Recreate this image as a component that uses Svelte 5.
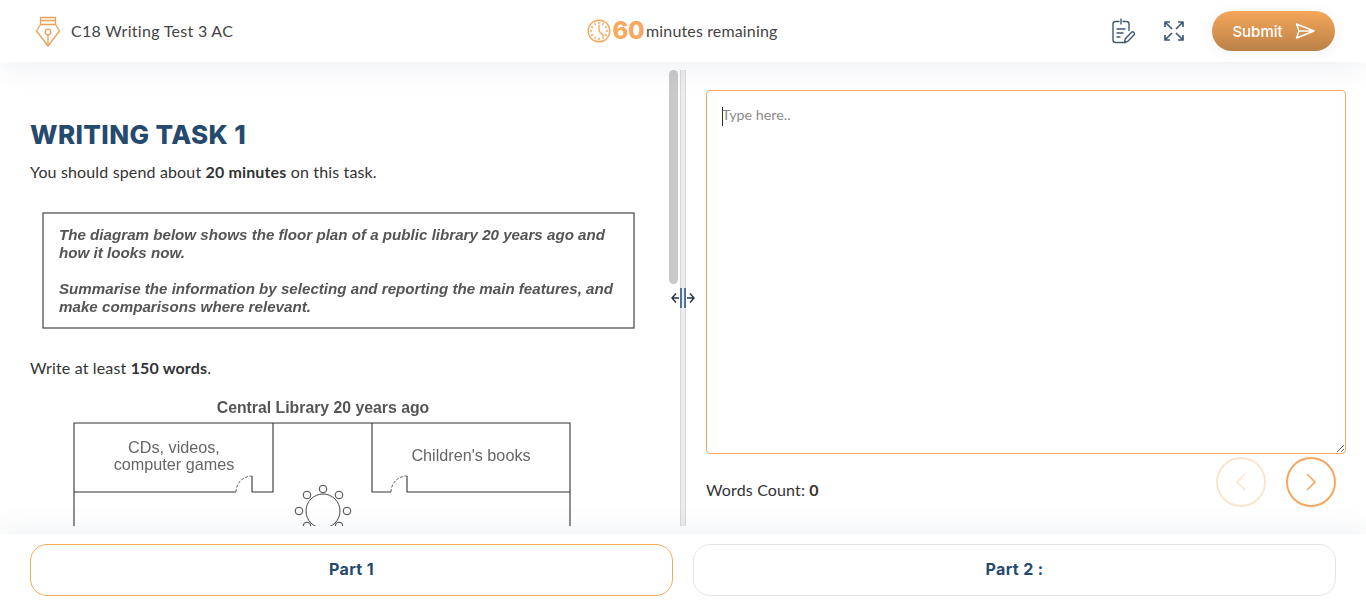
<script>
  const parts = [
    { label: 'Part 1', active: true },
    { label: 'Part 2 :', active: false }
  ];
  const ticks = [0, 30, 60, 90, 120, 150, 180, 210, 240, 270, 300, 330];
  const seats = [[323,488],[307,494],[339,494],[299,510],[347,510],[307,525],[339,525]];
</script>

<div class="app">
  <header class="top">
    <div class="brand">
      <svg class="nib" viewBox="0 0 26 32" width="26" height="32" aria-hidden="true">
        <path d="M5.500 2.500h15v7h-15zM5.500 5.500h15M5.500 9.500 1.500 16 13 31l11.500-15-4-6.500"/>
        <circle cx="13" cy="17" r="2.800"/>
        <path d="M13 20v10"/>
      </svg>
      <span class="label">C18 Writing Test 3 AC</span>
    </div>
    <div class="timer">
      <svg class="clock" viewBox="0 0 24 24" width="24" height="24" aria-hidden="true">
        <circle cx="12" cy="12" r="10.800"/>
        {#each ticks as t}
          <path class="tick" d="M12 3.400v1.300" transform="rotate({t} 12 12)"/>
        {/each}
        <path d="M12 6.500V12l4.500 5"/>
      </svg>
      <strong>60</strong>
      <span class="label">minutes remaining</span>
    </div>
    <div class="actions">
      <svg class="tool" viewBox="0 0 24 26" width="24" height="26" aria-hidden="true">
        <path d="M8 3.500H4.500a2.500 2.500 0 0 0-2.500 2.500v16a2.500 2.500 0 0 0 2.500 2.500h10M12 3.500h3.500a2.500 2.500 0 0 1 2.500 2.500v6.500M10 1v5M6 11h8M6 15h6M6 19h3"/>
        <path d="M13.500 24.500l.8-3.800 6-6.200a1.700 1.700 0 0 1 2.600 2.600l-6 6.100z"/>
      </svg>
      <svg class="tool expand" viewBox="0 0 20 20" width="20" height="20" aria-hidden="true">
        <path d="M1 6V1h5M1 1l7 7M14 1h5v5M19 1l-7 7M1 14v5h5M1 19l7-7M19 14v5h-5M19 19l-7-7"/>
      </svg>
      <button class="submit" type="button">
        <span>Submit</span>
        <svg viewBox="0 0 20 16" width="20" height="16" aria-hidden="true">
          <path d="M1.500 1 19 8 1.500 15 4 8zM4 8h15"/>
        </svg>
      </button>
    </div>
  </header>

  <main class="work">
    <section class="task">
      <h1>WRITING TASK 1</h1>
      <p class="first">You should spend about <b>20 minutes</b> on this task.</p>
      <svg class="scan box" viewBox="30 205 620 130" width="620" height="130" role="img" aria-label="Task prompt">
        <rect class="frame" x="43" y="212" width="591" height="115"/>
        <text x="59" y="239" textLength="546" lengthAdjust="spacingAndGlyphs">The diagram below shows the floor plan of a public library 20 years ago and</text>
        <text x="59" y="257" textLength="126" lengthAdjust="spacingAndGlyphs">how it looks now.</text>
        <text x="59" y="293" textLength="554" lengthAdjust="spacingAndGlyphs">Summarise the information by selecting and reporting the main features, and</text>
        <text x="59" y="311" textLength="252" lengthAdjust="spacingAndGlyphs">make comparisons where relevant.</text>
      </svg>
      <p class="second">Write at least <b>150 words</b>.</p>
      <svg class="scan plan" viewBox="30 395 620 200" width="620" height="200" role="img" aria-label="Floor plan">
        <text class="title" x="323" y="412" text-anchor="middle">Central Library 20 years ago</text>
        <path class="wall" d="M74 590V422H570V590M74 491H236M252 491V475M252 491H273V422M372 422V491H391M407 475V491H570"/>
        <path class="door" d="M236 491C236 482 243 475 252 475M391 491C391 482 398 475 407 475"/>
        <text class="room" x="174" y="452" text-anchor="middle">CDs, videos,</text>
        <text class="room" x="174" y="469" text-anchor="middle">computer games</text>
        <text class="room" x="471" y="460" text-anchor="middle">Children's books</text>
        <circle class="seat" cx="323" cy="510" r="17"/>
        {#each seats as s}
          <circle class="seat" cx={s[0]} cy={s[1]} r="3.800"/>
        {/each}
      </svg>
      <div class="thumb"></div>
    </section>

    <div class="divider">
      <svg class="cursor" viewBox="0 0 24 22" width="24" height="22" aria-hidden="true">
        <path class="c-dark" d="M1 11h7M5 6.500 1 11l4 4.500M23 11h-7M19 6.500 23 11l-4 4.500"/>
        <path class="c-blue" d="M10 1v20M14 1v20"/>
      </svg>
    </div>

    <section class="answer">
      <div class="field">
        <textarea placeholder="Type here.."></textarea>
        <i class="caret"></i>
      </div>
      <div class="meta">
        <span class="count">Words Count: <b>0</b></span>
        <div class="nav">
          <button class="round off" type="button" aria-label="Previous">
            <svg viewBox="0 0 12 20" width="12" height="20"><path d="M10 2 2 10l8 8"/></svg>
          </button>
          <button class="round" type="button" aria-label="Next">
            <svg viewBox="0 0 12 20" width="12" height="20"><path d="m2 2 8 8-8 8"/></svg>
          </button>
        </div>
      </div>
    </section>
  </main>

  <footer class="parts">
    {#each parts as p}
      <button type="button" class:active={p.active}>{p.label}</button>
    {/each}
  </footer>
</div>

<style>
  :global(body) {
    margin: 0;
    background: #fff;
    overflow: hidden;
  }
  .app {
    height: 606px;
    display: flex;
    flex-direction: column;
    font-family: "Lato", "Open Sans", sans-serif;
    color: #333;
    overflow: hidden;
  }
  .top {
    position: relative;
    z-index: 3;
    flex: 0 0 62px;
    display: grid;
    grid-template-columns: 1fr auto 1fr;
    align-items: center;
    padding: 0 31px 0 35px;
    background: #fff;
    box-shadow: 0 4px 30px rgba(60, 80, 120, 0.09);
  }
  .label {
    padding-bottom: 2px;
  }
  .brand {
    display: flex;
    align-items: center;
    gap: 10px;
    font-size: 16px;
    letter-spacing: 0.3px;
    color: #444;
  }
  .nib {
    fill: none;
    stroke: #ef9f55;
    stroke-width: 1.3;
    stroke-linejoin: round;
    flex: none;
  }
  .timer {
    display: flex;
    align-items: center;
    gap: 2px;
    font-size: 16px;
    letter-spacing: 0.15px;
    color: #444;
    margin-left: -6px;
  }
  .timer strong {
    font-family: "Inter", sans-serif;
    font-size: 24px;
    font-weight: 800;
    color: #f5a95f;
    line-height: 1;
    letter-spacing: -0.5px;
  }
  .clock {
    fill: none;
    stroke: #f5a95f;
    stroke-width: 1.4;
    stroke-linecap: round;
    stroke-linejoin: round;
  }
  .actions {
    display: flex;
    justify-content: flex-end;
    align-items: center;
  }
  .tool {
    fill: none;
    stroke: #3e5a78;
    stroke-width: 1.4;
    stroke-linecap: round;
    stroke-linejoin: round;
    margin-right: 29px;
  }
  .expand {
    stroke-width: 1.7;
    stroke-linecap: butt;
    margin-right: 28px;
  }
  .submit {
    width: 123px;
    height: 40px;
    border: 0;
    border-radius: 20px;
    background: linear-gradient(180deg, #f5a65b, #ba8146);
    box-shadow: 0 2px 14px rgba(60, 80, 120, 0.08);
    color: #fff;
    font: 500 15px "Inter", sans-serif;
    display: flex;
    align-items: center;
    justify-content: center;
    gap: 12px;
    padding: 0;
  }
  .submit svg {
    fill: none;
    stroke: #fff;
    stroke-width: 1.5;
    stroke-linejoin: round;
  }
  .work {
    flex: 1;
    min-height: 0;
    display: flex;
    padding: 8px 0;
    position: relative;
    z-index: 1;
  }
  .task {
    position: relative;
    flex: 0 0 680px;
    box-sizing: border-box;
    padding: 50px 0 0 30px;
    overflow: hidden;
  }
  h1 {
    margin: 0;
    font: 800 26px/30px "Inter", sans-serif;
    color: #264a6e;
    letter-spacing: 0.4px;
  }
  .task p {
    margin: 0;
    font-size: 16px;
    letter-spacing: 0.15px;
    line-height: 22px;
    color: #333;
  }
  .task p b { font-weight: 700; }
  .first { padding-top: 11px; }
  .second { padding-top: 21px; }
  .scan {
    display: block;
    flex: none;
    filter: blur(0.7px);
  }
  .box {
    margin-top: 23px;
  }
  .plan {
    margin-top: 17px;
  }
  .frame {
    fill: #fff;
    stroke: #444;
    stroke-width: 1.2;
  }
  .box text {
    font: italic 700 15.500px "Liberation Sans", sans-serif;
    fill: #555;
  }
  .title {
    font: 700 15.800px "Liberation Sans", sans-serif;
    fill: #555;
  }
  .room {
    font: 400 16.200px "Liberation Sans", sans-serif;
    fill: #666;
  }
  .wall {
    fill: none;
    stroke: #333;
    stroke-width: 1.1;
  }
  .door {
    fill: none;
    stroke: #666;
    stroke-width: 1;
    stroke-dasharray: 3 1.5;
  }
  .seat {
    fill: #fff;
    stroke: #444;
    stroke-width: 1;
  }
  .thumb {
    position: absolute;
    left: 669px;
    top: 0;
    width: 9px;
    height: 214px;
    border-radius: 5px;
    background: #c9c9c9;
  }
  .divider {
    position: relative;
    flex: 0 0 6px;
    box-sizing: border-box;
    background: #ececec;
    border-left: 1px solid #d8d8d8;
    border-right: 1px solid #d8d8d8;
  }
  .cursor {
    position: absolute;
    left: -10px;
    top: 217px;
    fill: none;
    stroke-width: 1.5;
  }
  .c-dark { stroke: #28384a; }
  .c-blue { stroke: #234f7e; }
  .answer {
    flex: 1;
    min-width: 0;
    display: flex;
    flex-direction: column;
    padding: 20px 20px 0 20px;
  }
  .field {
    position: relative;
    flex: 0 0 364px;
  }
  textarea {
    display: block;
    box-sizing: border-box;
    width: 100%;
    height: 100%;
    border: 1px solid #f4a75f;
    border-radius: 4px;
    padding: 15px;
    outline: none;
    background: #fff;
    font: 14.3px "Lato", sans-serif;
    color: #333;
  }
  textarea::placeholder { color: #8b8b8b; opacity: 1; }
  .caret {
    position: absolute;
    left: 16px;
    top: 17px;
    width: 1px;
    height: 19px;
    background: #333;
  }
  .meta {
    display: flex;
    justify-content: space-between;
    padding: 3px 10px 0 0;
  }
  .count {
    font-size: 16px;
    letter-spacing: 0.15px;
    padding-top: 22px;
    line-height: 22px;
  }
  .count b { font-weight: 700; }
  .nav {
    display: flex;
    gap: 20px;
  }
  .round {
    width: 50px;
    height: 50px;
    box-sizing: border-box;
    border-radius: 50%;
    border: 2px solid #f5a75f;
    background: transparent;
    padding: 0;
    display: flex;
    align-items: center;
    justify-content: center;
  }
  .round svg {
    fill: none;
    stroke: #f5a75f;
    stroke-width: 1.6;
  }
  .round.off { opacity: 0.3; }
  .parts {
    position: relative;
    z-index: 2;
    flex: 0 0 72px;
    box-sizing: border-box;
    padding: 10px 30px 10px;
    display: grid;
    grid-template-columns: 1fr 1fr;
    gap: 20px;
    background: #fff;
    box-shadow: 0 -6px 28px rgba(60, 80, 120, 0.07);
  }
  .parts button {
    border: 1px solid #dfe6e3;
    border-radius: 17px;
    background: #fff;
    font: 700 16px "Inter", sans-serif;
    letter-spacing: 0.35px;
    color: #264a6e;
    padding: 0 0 2px;
  }
  .parts button.active { border-color: #f5a95f; }
</style>
